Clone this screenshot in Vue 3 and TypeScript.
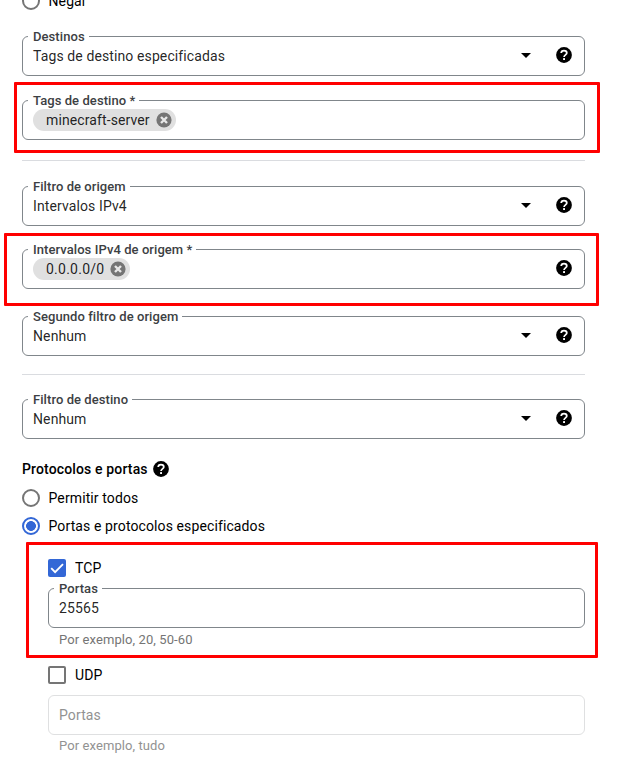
<script setup lang="ts">
import { defineComponent, h, ref } from 'vue'

const HelpIcon = defineComponent({
  setup: () => () =>
    h('svg', { width: 16, height: 16, viewBox: '0 0 16 16', 'aria-hidden': 'true' }, [
      h('circle', { cx: 8, cy: 8, r: 7.9, fill: '#000' }),
      h('path', {
        d: 'M5.2 6.1C5.2 4.4 6.4 3.5 8 3.5s2.8.95 2.8 2.4c0 1.9-2.75 2-2.75 4.1',
        fill: 'none',
        stroke: '#fff',
        'stroke-width': 1.75,
      }),
      h('rect', { x: 7.1, y: 11.1, width: 1.9, height: 1.9, fill: '#fff' }),
    ]),
})

const action = ref('')
const protocolMode = ref('specified')
const tcp = ref(true)
const udp = ref(false)
</script>

<template>
  <main class="page">
    <label class="option deny">
      <input v-model="action" class="radio" type="radio" name="action" value="deny" />
      <span>Negar</span>
    </label>

    <div class="field targets">
      <span class="field-label">Destinos</span>
      <span class="value">Tags de destino especificadas</span>
      <i class="caret"></i>
      <HelpIcon />
    </div>

    <div class="field target-tags">
      <span class="field-label">Tags de destino *</span>
      <span class="chip">
        minecraft-server
        <svg width="16" height="16" viewBox="0 0 16 16">
          <circle cx="8" cy="8" r="7.6" fill="#757575" />
          <path d="M5 5l6 6M11 5l-6 6" stroke="#e8e8e8" stroke-width="2.4" />
        </svg>
      </span>
    </div>

    <hr class="divider first" />

    <div class="field source-filter">
      <span class="field-label">Filtro de origem</span>
      <span class="value">Intervalos IPv4</span>
      <i class="caret"></i>
      <HelpIcon />
    </div>

    <div class="field ranges">
      <span class="field-label">Intervalos IPv4 de origem *</span>
      <span class="chip address">
        0.0.0.0/0
        <svg width="16" height="16" viewBox="0 0 16 16">
          <circle cx="8" cy="8" r="7.6" fill="#757575" />
          <path d="M5 5l6 6M11 5l-6 6" stroke="#e8e8e8" stroke-width="2.4" />
        </svg>
      </span>
      <HelpIcon />
    </div>

    <div class="field second-filter">
      <span class="field-label">Segundo filtro de origem</span>
      <span class="value">Nenhum</span>
      <i class="caret"></i>
      <HelpIcon />
    </div>

    <hr class="divider second" />

    <div class="field destination">
      <span class="field-label">Filtro de destino</span>
      <span class="value">Nenhum</span>
      <i class="caret"></i>
      <HelpIcon />
    </div>

    <h2 class="heading"><span>Protocolos e portas</span><HelpIcon /></h2>

    <label class="option all">
      <input v-model="protocolMode" class="radio" type="radio" name="protocol" value="all" />
      <span>Permitir todos</span>
    </label>
    <label class="option specified">
      <input v-model="protocolMode" class="radio" type="radio" name="protocol" value="specified" />
      <span>Portas e protocolos especificados</span>
    </label>

    <section class="protocols">
      <label class="check">
        <input v-model="tcp" type="checkbox" />
        <span class="box">
          <svg v-if="tcp" width="18" height="18" viewBox="0 0 18 18">
            <path d="M3.2 9.2l3.9 3.9 7.9-8" fill="none" stroke="#fff" stroke-width="1.9" />
          </svg>
        </span>
        <span>TCP</span>
      </label>
      <div class="field ports">
        <span class="field-label">Portas</span>
        <span class="value">25565</span>
      </div>
      <p class="hint">Por exemplo, 20, 50-60</p>

      <label class="check udp">
        <input v-model="udp" type="checkbox" />
        <span class="box"></span>
        <span>UDP</span>
      </label>
      <div class="field disabled">
        <span class="value">Portas</span>
      </div>
      <p class="hint faded">Por exemplo, tudo</p>
    </section>

    <div class="highlight tags-mark"></div>
    <div class="highlight ranges-mark"></div>
    <div class="highlight tcp-mark"></div>
  </main>
</template>

<style>
body {
  background: #fff;
}
</style>

<style scoped>
.page {
  position: relative;
  box-sizing: border-box;
  width: 626px;
  height: 764px;
  padding: 0 41px 0 22px;
  overflow: hidden;
  display: flex;
  flex-direction: column;
  font: 14px/20px Roboto, sans-serif;
  letter-spacing: 0.11px;
  color: #000;
}
.page > * {
  flex-shrink: 0;
}
.option {
  display: flex;
  align-items: center;
  gap: 8.5px;
  height: 20px;
}
.deny {
  margin-top: -9px;
}
.radio {
  appearance: none;
  box-sizing: border-box;
  width: 18px;
  height: 18px;
  margin: 0;
  border: 2px solid #757575;
  border-radius: 50%;
}
.radio:checked {
  border-color: #3367d6;
  background: radial-gradient(circle, #3367d6 4.6px, #fff 5.2px);
}
.field {
  position: relative;
  box-sizing: border-box;
  display: flex;
  align-items: center;
  height: 40px;
  padding: 0 12px 2px 10px;
  border: 1px solid #80868b;
  border-radius: 6px;
  color: rgba(0, 0, 0, 0.87);
}
.field-label {
  position: absolute;
  top: -8px;
  left: 5px;
  padding: 0 4px 0 5px;
  background: #fff;
  font-size: 13px;
  font-weight: 500;
  line-height: 16px;
  letter-spacing: 0.07px;
  color: #3c4043;
  white-space: nowrap;
}
.value,
.chip {
  margin-right: auto;
}
.value {
  padding-top: 2px;
}
.caret {
  width: 0;
  height: 0;
  margin: 1px 25px 0 0;
  border: 5.5px solid transparent;
  border-top-color: #000;
  border-bottom: 0;
}
.chip {
  display: flex;
  align-items: center;
  gap: 6px;
  box-sizing: border-box;
  height: 22px;
  margin-top: 2px;
  padding: 0 4px 0 13px;
  border-radius: 11px;
  background: #e0e0e0;
}
.address {
  letter-spacing: 0.25px;
}
.targets {
  margin-top: 25px;
}
.target-tags {
  margin-top: 24px;
}
.divider {
  width: 100%;
  height: 1px;
  margin: 0;
  border: 0;
  background: #dadce0;
}
.first {
  margin-top: 20px;
}
.source-filter {
  margin-top: 25px;
}
.ranges {
  margin-top: 23px;
}
.second-filter {
  margin-top: 27px;
}
.second {
  margin-top: 18px;
}
.destination {
  margin-top: 24px;
}
.heading {
  display: flex;
  align-items: center;
  gap: 5px;
  height: 20px;
  margin: 20px 0 0;
  font-size: 14px;
  font-weight: 500;
  letter-spacing: 0.14px;
}
.all {
  margin-top: 9px;
}
.specified {
  margin-top: 8px;
}
.protocols {
  display: flex;
  flex-direction: column;
  margin-top: 22px;
  padding-left: 26px;
}
.check {
  display: flex;
  align-items: center;
  gap: 9px;
  height: 20px;
}
.check input {
  position: absolute;
  opacity: 0;
}
.box {
  box-sizing: border-box;
  display: flex;
  width: 18px;
  height: 18px;
  border: 2px solid #757575;
  border-radius: 2px;
}
.check input:checked + .box {
  border: 0;
  background: #3367d6;
}
.ports {
  margin-top: 10px;
}
.hint {
  margin: 4px 0 0 11px;
  font-size: 13px;
  line-height: 16px;
  letter-spacing: 0.09px;
  color: #757575;
}
.udp {
  margin-top: 17px;
}
.disabled {
  margin-top: 10px;
  border-color: #dfe0e1;
  color: #929292;
}
.faded {
  margin-top: 3px;
  color: #929292;
}
.highlight {
  position: absolute;
  box-sizing: border-box;
  border: 3px solid #f00;
  border-radius: 1px;
  pointer-events: none;
}
.tags-mark {
  left: 14px;
  top: 82px;
  width: 586px;
  height: 71px;
}
.ranges-mark {
  left: 4px;
  top: 233px;
  width: 595px;
  height: 73px;
}
.tcp-mark {
  left: 26px;
  top: 542px;
  width: 572px;
  height: 116px;
}
</style>
